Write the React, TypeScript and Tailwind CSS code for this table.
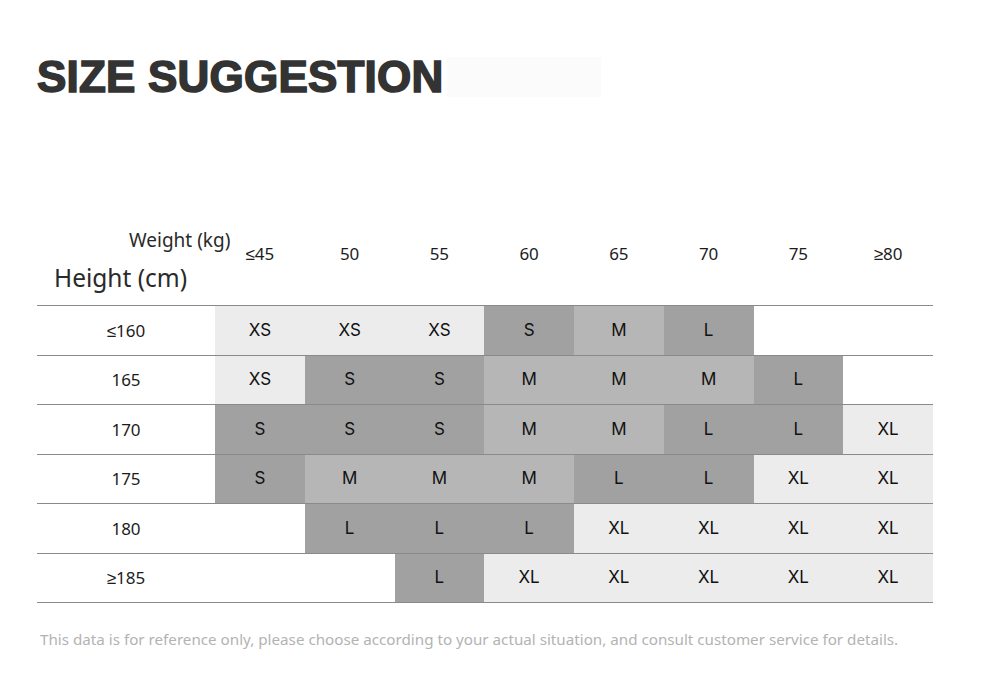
const weights = ['≤45', '50', '55', '60', '65', '70', '75', '≥80'];

type Size = 'XS' | 'S' | 'M' | 'L' | 'XL' | '';

const rows: { height: string; sizes: Size[] }[] = [
  { height: '≤160', sizes: ['XS', 'XS', 'XS', 'S', 'M', 'L', '', ''] },
  { height: '165', sizes: ['XS', 'S', 'S', 'M', 'M', 'M', 'L', ''] },
  { height: '170', sizes: ['S', 'S', 'S', 'M', 'M', 'L', 'L', 'XL'] },
  { height: '175', sizes: ['S', 'M', 'M', 'M', 'L', 'L', 'XL', 'XL'] },
  { height: '180', sizes: ['', 'L', 'L', 'L', 'XL', 'XL', 'XL', 'XL'] },
  { height: '≥185', sizes: ['', '', 'L', 'XL', 'XL', 'XL', 'XL', 'XL'] },
];

const cellBg: Record<Size, string> = {
  XS: 'bg-[#ececec]',
  S: 'bg-[#a1a1a1]',
  M: 'bg-[#b6b6b6]',
  L: 'bg-[#a1a1a1]',
  XL: 'bg-[#ececec]',
  '': 'bg-white',
};

function App() {
  return (
    <div className="min-h-screen w-[1000px] bg-white pl-[37px] pr-[67px] font-['Noto_Sans',sans-serif] text-[#1c1c1c]">
      {/* title */}
      <div className="flex items-center pt-[55px]">
        <h1 className="font-['Liberation_Sans',Arial,sans-serif] text-[44px] font-bold leading-none tracking-[0.2px] text-[#333333] [-webkit-text-stroke:1.6px_#333333]">
          SIZE SUGGESTION
        </h1>
        <div className="ml-[4px] h-[40px] w-[154px] bg-[#fbfbfb]" />
      </div>

      {/* table */}
      <div className="mt-[126px]">
        <div className="grid h-[80px] grid-cols-[178px_repeat(8,1fr)]">
          <div className="flex flex-col">
            <span className="mt-[5px] whitespace-nowrap pl-[92px] text-[19px] leading-[20px] text-[#2a2a2a]">
              Weight (kg)
            </span>
            <span className="mt-[14px] pl-[17px] text-[24.5px] leading-[28px] text-[#2a2a2a]">
              Height (cm)
            </span>
          </div>
          {weights.map((w) => (
            <div key={w} className="pt-[19px] text-center text-[17px] leading-[20px]">
              {w}
            </div>
          ))}
        </div>

        <div className="border-b border-[#8a8a8a]">
          {rows.map((r) => (
            <div
              key={r.height}
              className="grid h-[49.5px] grid-cols-[178px_repeat(8,1fr)] border-t border-[#8a8a8a]"
            >
              <div className="flex items-center justify-center text-[17px]">{r.height}</div>
              {r.sizes.map((s, i) => (
                <div
                  key={i}
                  className={`flex items-center justify-center font-['Inter',sans-serif] text-[17px] text-[#111] ${cellBg[s]}`}
                >
                  {s}
                </div>
              ))}
            </div>
          ))}
        </div>
      </div>

      <p className="mt-[26px] pl-[3px] text-[15.2px] leading-[20px] text-[#b3b3b3]">
        This data is for reference only, please choose according to your actual situation, and consult customer service for details.
      </p>
    </div>
  );
}

export default App;
